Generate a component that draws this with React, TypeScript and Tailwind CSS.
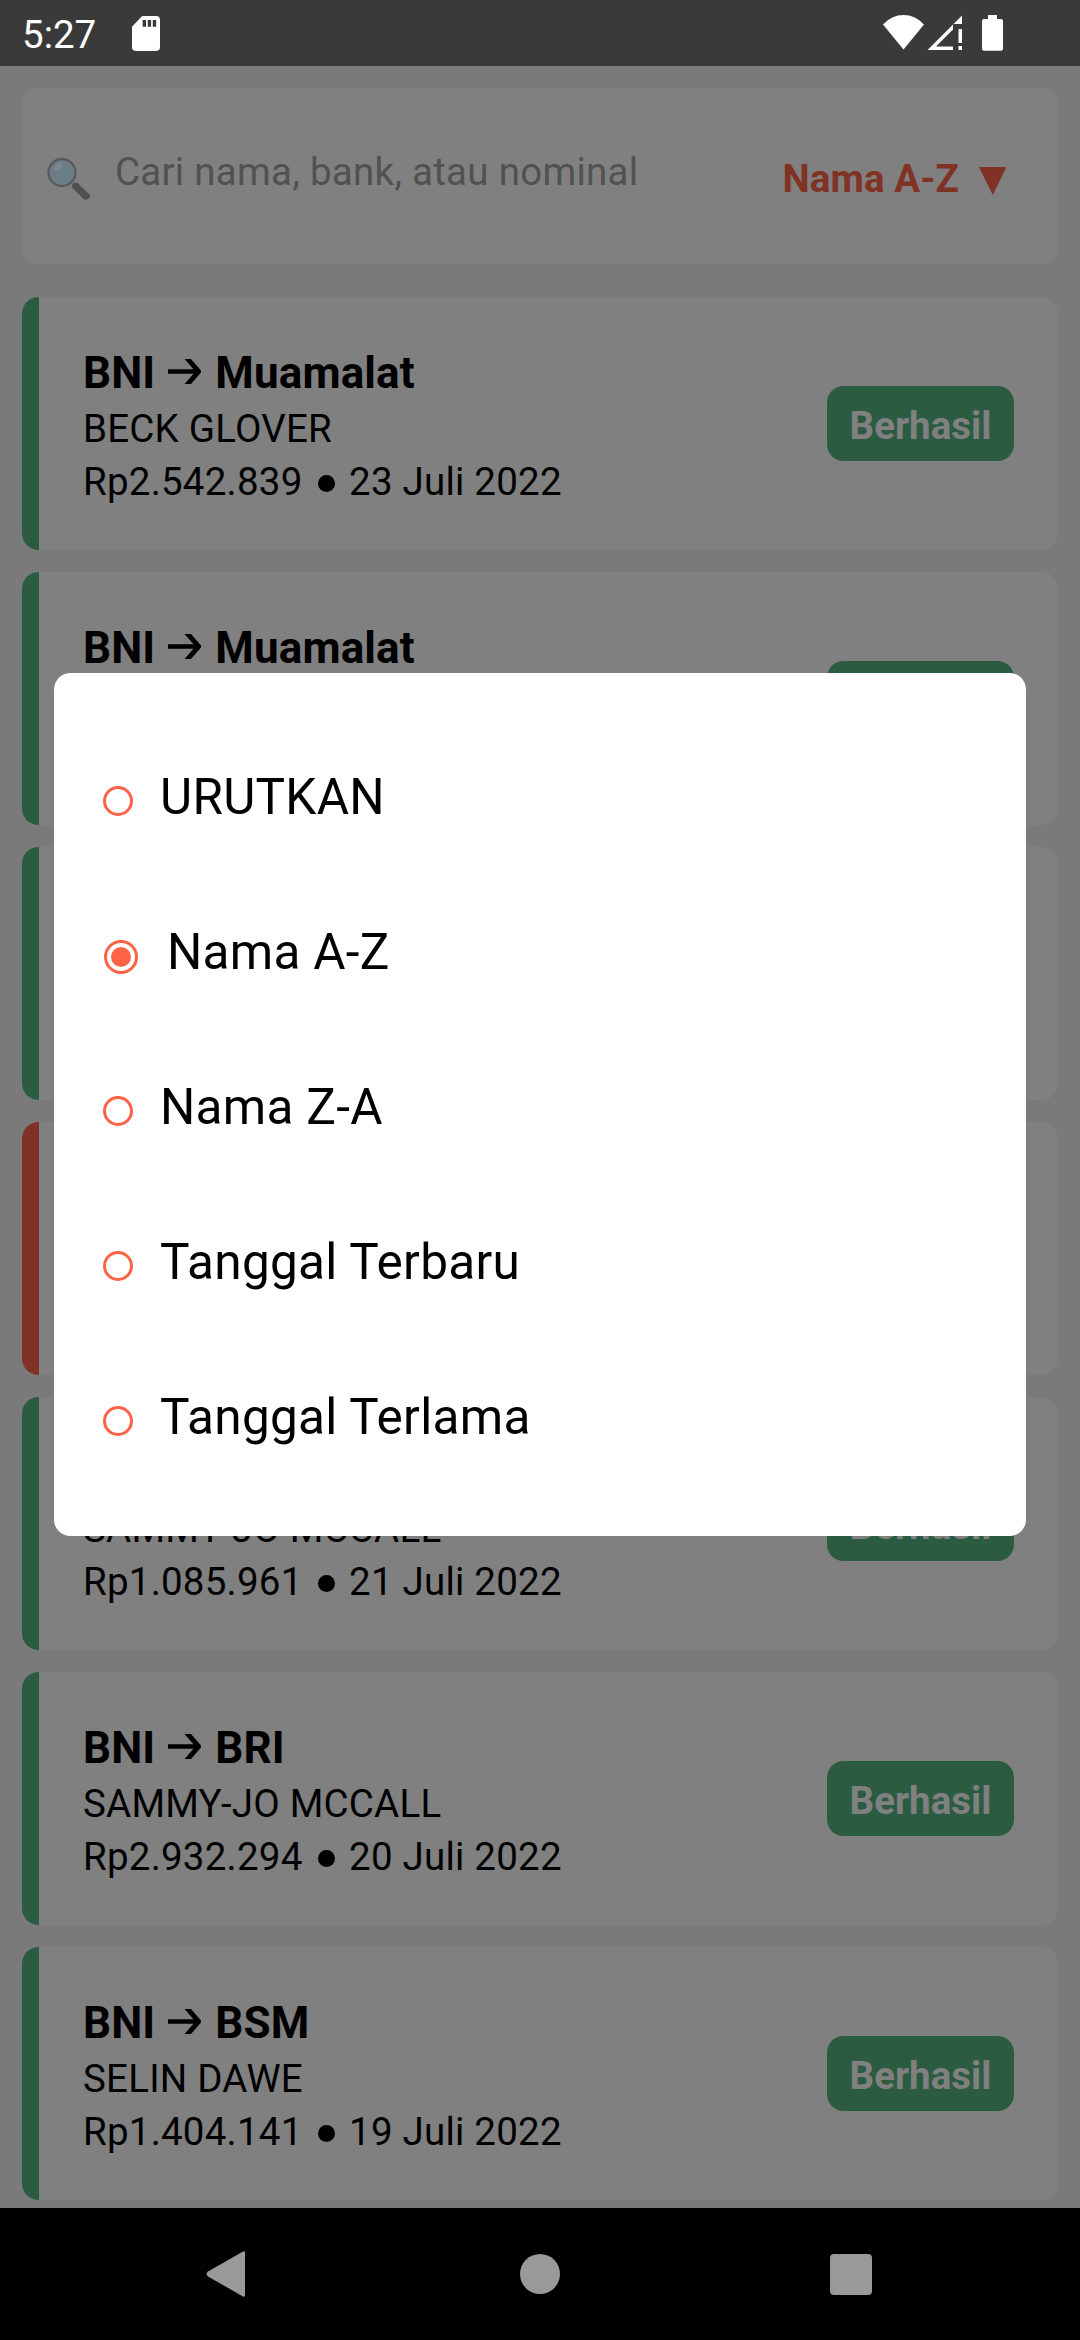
type Transaction = {
  route?: [string, string];
  name?: string;
  amount?: string;
  date?: string;
  status?: string;
  ok: boolean;
};

const transactions: Transaction[] = [
  { route: ['BNI', 'Muamalat'], name: 'BECK GLOVER', amount: 'Rp2.542.839', date: '23 Juli 2022', status: 'Berhasil', ok: true },
  { route: ['BNI', 'Muamalat'], status: '', ok: true },
  { ok: true },
  { ok: false },
  { name: 'SAMMY-JO MCCALL', amount: 'Rp1.085.961', date: '21 Juli 2022', status: 'Berhasil', ok: true },
  { route: ['BNI', 'BRI'], name: 'SAMMY-JO MCCALL', amount: 'Rp2.932.294', date: '20 Juli 2022', status: 'Berhasil', ok: true },
  { route: ['BNI', 'BSM'], name: 'SELIN DAWE', amount: 'Rp1.404.141', date: '19 Juli 2022', status: 'Berhasil', ok: true },
];

const options = ['URUTKAN', 'Nama A-Z', 'Nama Z-A', 'Tanggal Terbaru', 'Tanggal Terlama'];

function StatusBar() {
  return (
    <header className="flex h-[66px] shrink-0 items-center bg-[#3a3a3a] pl-[22px] pr-[77px] text-white">
      <span className="w-[110px] pt-[4px] text-[38.500px] leading-[46px]">5:27</span>
      <svg className="h-[35px] w-[28px]" viewBox="0 0 29 36" fill="#fff">
        <path
          fillRule="evenodd"
          d="M10.500 0H25Q29 0 29 4V32Q29 36 25 36H4Q0 36 0 32V11ZM11 4V11H14.500V4ZM16.300 4V11H19.800V4ZM21.500 4V11H25V4Z"
        />
      </svg>
      <svg className="ml-auto h-[38px] w-[121px]" viewBox="0 0 121 38" fill="#fff">
        <path d="M1 10.500Q9.500 1 21.500 1T42 10.500L21.500 35.500Z" />
        <path
          fillRule="evenodd"
          d="M45.500 36L80 1.500V10H71V36ZM54 32.500H71V15.500ZM76.500 15H80V29H76.500ZM76.500 32H80V36H76.500Z"
        />
        <path d="M106 1H115V5H119Q121 5 121 7V34.700Q121 36.700 119 36.700H102Q100 36.700 100 34.700V7Q100 5 102 5H106Z" />
      </svg>
    </header>
  );
}

function SearchIcon() {
  return (
    <svg className="ml-[1px] mt-[5px] h-[44px] w-[44px]" viewBox="0 0 44 44">
      <path d="M26 26L24.500 30L37 42.500Q40 44 43 40Q43.500 38 42 37L30 25.500Z" fill="#505050" />
      <circle cx="15" cy="15.500" r="13.500" fill="#6b7e87" stroke="#5a5a5a" strokeWidth="2.300" />
      <ellipse cx="11" cy="10" rx="5" ry="3" fill="#7b888e" transform="rotate(-40 11 10)" />
    </svg>
  );
}

function Card({ t }: { t: Transaction }) {
  return (
    <article className="flex h-[253px] shrink-0 overflow-hidden rounded-[16.500px] bg-[#808080]">
      <div className={t.ok ? 'w-[16.500px] bg-[#2b5c42]' : 'w-[16.500px] bg-[#803224]'} />
      <div className="flex flex-1 items-center justify-between pl-[44.500px] pr-[44px]">
        <div className="self-start pt-[49px] text-black">
          <div className="flex h-[54px] items-center text-[44px] font-bold leading-[54px] tracking-[0.120px]">
            {t.route && (
              <>
                {t.route[0]}
                <svg className="ml-[12.500px] mr-[14.500px] mt-[-4px] h-[25px] w-[33px]" viewBox="0 0 33 25" fill="#000">
                  <path d="M16.500 0H23L33 11.400V13.600L23 25H16.500L25.500 14.700H0V10.300H25.500Z" />
                </svg>
                {t.route[1]}
              </>
            )}
          </div>
          <div className="h-[56px] text-[38.500px] leading-[58px] tracking-[0.220px]">{t.name}</div>
          {t.amount && (
            <div className="flex items-center text-[38.500px] leading-[51px] tracking-[0.220px]">
              {t.amount}
              <span className="ml-[15px] mr-[14.500px] mt-[3px] size-[17px] rounded-full bg-black" />
              {t.date}
            </div>
          )}
        </div>
        {t.status !== undefined && (
          <span className="flex h-[75px] w-[187px] items-center justify-center rounded-[16.500px] bg-[#2b5c42] pt-[4px] text-[38.500px] font-bold text-[#808080]">
            {t.status}
          </span>
        )}
      </div>
    </article>
  );
}

function Radio({ on }: { on: boolean }) {
  return on ? (
    <span className="ml-[1px] mr-[29px] mt-[8px] flex size-[34px] items-center justify-center rounded-full border-[3px] border-[#ff6347]">
      <span className="size-[20px] rounded-full bg-[#ff6347]" />
    </span>
  ) : (
    <span className="mr-[27px] mt-[7px] size-[30px] rounded-full border-[3px] border-[#ff6347]" />
  );
}

export default function App() {
  return (
    <div className="relative flex h-[2340px] w-[1080px] flex-col overflow-hidden bg-[#7a7a7a] font-[Roboto,sans-serif]">
      <StatusBar />
      <main className="flex min-h-0 flex-1 flex-col overflow-hidden px-[22px] pt-[22px]">
        <div className="mb-[33px] flex h-[176px] shrink-0 items-center rounded-[16.500px] bg-[#808080] pl-[24px] pr-[52px]">
          <SearchIcon />
          <span className="ml-[24px] mt-[-8px] text-[38.500px] tracking-[0.270px] text-[#515151]">
            Cari nama, bank, atau nominal
          </span>
          <span className="ml-auto mt-[6px] text-[38.500px] font-bold tracking-[0.100px] text-[#803224]">Nama A-Z</span>
          <svg className="ml-[19.500px] mt-[10px] h-[28px] w-[27.500px]" viewBox="0 0 28 28" preserveAspectRatio="none">
            <path d="M0 0H28L14 28Z" fill="#803224" />
          </svg>
        </div>
        <div className="flex flex-col gap-[22px]">
          {transactions.map((t, i) => (
            <Card key={i} t={t} />
          ))}
        </div>
      </main>
      <nav className="flex h-[132px] shrink-0 items-center justify-between bg-black pl-[206px] pr-[208px]">
        <svg className="h-[46px] w-[40px]" viewBox="0 0 40 46">
          <path d="M37 0.500Q39 -0.500 39 2V44Q39 46.500 37 45.500L2 25.500Q-1 23 2 20.500Z" fill="#999" />
        </svg>
        <span className="ml-[4px] size-[40px] rounded-full bg-[#999]" />
        <span className="h-[41px] w-[42px] rounded-[4px] bg-[#999]" />
      </nav>
      <div className="absolute left-[54px] top-[673px] flex h-[863px] w-[972px] flex-col rounded-[16.500px] bg-white pl-[49px] pt-[47px] text-[49.500px] tracking-[0.280px] text-black">
        {options.map((o) => (
          <div key={o} className="flex h-[155px] items-center">
            <Radio on={o === 'Nama A-Z'} />
            {o}
          </div>
        ))}
      </div>
    </div>
  );
}
